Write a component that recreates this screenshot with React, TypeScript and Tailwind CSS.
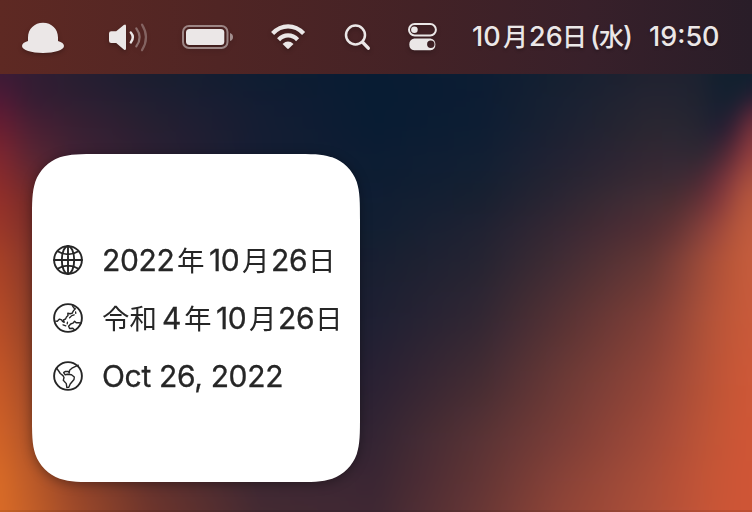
import type { ReactNode } from "react";

const XS = [0, 32, 75, 150, 260, 375, 480, 560, 650, 675, 700, 715, 730, 740, 752];

// Wallpaper colours: one row per y position, one colour per entry of XS.
const ROWS: { y: number; c: string[] }[] = [
  { y: 74, c: ["#3d1a36", "#321d33", "#281e31", "#1b1e30", "#0f1d32", "#081c33", "#0c1d33", "#152031", "#202230", "#202230", "#1c2230", "#14202f", "#13202f", "#10202f", "#10202f"] },
  { y: 98, c: ["#501a36", "#361d33", "#2d1f32", "#201f31", "#121d33", "#081c33", "#0d1d33", "#182132", "#252431", "#232431", "#202330", "#172031", "#152030", "#182031", "#281f33"] },
  { y: 110, c: ["#5c1b34", "#3f1e34", "#331f32", "#231f31", "#141d33", "#081c33", "#0d1d33", "#192132", "#272531", "#262531", "#212431", "#1a2031", "#1d2031", "#2c2033", "#562438"] },
  { y: 130, c: ["#6c1f31", "#4d2034", "#3a2033", "#281f32", "#151d33", "#091c33", "#0e1e34", "#1c2132", "#2b2731", "#2a2732", "#272532", "#222033", "#321f33", "#552637", "#7a353c"] },
  { y: 154, c: ["#7e2630", "#592533", "#402235", "#2c2032", "#151e33", "#0c1d33", "#111f34", "#212233", "#322733", "#322834", "#2f2833", "#3d2635", "#5c2a36", "#7a343c", "#963f3f"] },
  { y: 180, c: ["#8b2c2c", "#68282f", "#402230", "#2a2031", "#151e33", "#0d1d33", "#142032", "#262433", "#3a2a34", "#3d2b34", "#4a2a34", "#662e39", "#83393d", "#9c453e", "#ab513e"] },
  { y: 200, c: ["#94302a", "#752b29", "#3a222f", "#2a2031", "#151e33", "#101e33", "#182031", "#2c2633", "#452e34", "#4c2e33", "#623136", "#7c363b", "#97443c", "#ad513d", "#b8583e"] },
  { y: 230, c: ["#9c3829", "#7d302a", "#3a222f", "#2a2031", "#151e33", "#121f32", "#202233", "#372834", "#542f34", "#643435", "#83403b", "#9a463c", "#ad523b", "#b9573c", "#c15c3e"] },
  { y: 260, c: ["#a84127", "#85372a", "#3a222f", "#2a2031", "#151e33", "#181f31", "#252432", "#402c34", "#643735", "#7c3e38", "#994a3a", "#ac503a", "#b85639", "#c05a3b", "#c55d3e"] },
  { y: 320, c: ["#b74c27", "#904128", "#3a222f", "#2a2031", "#181e32", "#1f2033", "#322734", "#563234", "#803f37", "#934638", "#a95039", "#b75439", "#bf5738", "#c55939", "#c95a3b"] },
  { y: 380, c: ["#c65827", "#a04a28", "#3a222f", "#2a2031", "#201f31", "#2a2133", "#442c33", "#6a3936", "#924538", "#a24b38", "#b25138", "#bd5437", "#c55637", "#ca5737", "#cd5838"] },
  { y: 440, c: ["#d16328", "#b05429", "#6a342c", "#4a2830", "#2c2231", "#342533", "#593335", "#7a3d37", "#a14a38", "#ae4e38", "#bb5337", "#c35536", "#c95636", "#cd5636", "#cf5636"] },
  { y: 482, c: ["#d86b27", "#bd5b28", "#96452a", "#65332e", "#3f2934", "#3b2633", "#623535", "#884238", "#aa4e38", "#b65037", "#c15437", "#c75536", "#cb5536", "#ce5536", "#cf5636"] },
  { y: 512, c: ["#d96b27", "#c25e28", "#9f4a29", "#6f352c", "#442a32", "#3f2833", "#683735", "#8f4437", "#ae4f38", "#b85138", "#c25438", "#c85536", "#cc5536", "#ce5536", "#ce5536"] },
];

function Wallpaper() {
  return (
    <svg className="absolute inset-0" width="752" height="512" viewBox="0 0 752 512" aria-hidden="true">
      <defs>
        <filter id="soften" filterUnits="userSpaceOnUse" x="-60" y="-60" width="872" height="632" colorInterpolationFilters="sRGB">
          <feGaussianBlur stdDeviation="8" />
        </filter>
        {ROWS.map((r, i) => (
          <linearGradient key={i} id={`row${i}`} x1="0" x2="752" y1="0" y2="0" gradientUnits="userSpaceOnUse">
            {r.c.map((c, k) => (
              <stop key={k} offset={XS[k] / 752} stopColor={c} />
            ))}
          </linearGradient>
        ))}
        {ROWS.slice(1).map((r, i) => (
          <g key={i}>
            <linearGradient id={`fade${i + 1}`} x1="0" x2="0" y1={ROWS[i].y} y2={r.y} gradientUnits="userSpaceOnUse">
              <stop offset="0" stopColor="#fff" stopOpacity="0" />
              <stop offset="1" stopColor="#fff" />
            </linearGradient>
            <mask id={`mask${i + 1}`} maskUnits="userSpaceOnUse" x="-60" y="-60" width="872" height="632" style={{ maskType: "alpha" }}>
              <rect x="-60" y="-60" width="872" height="632" fill={`url(#fade${i + 1})`} />
            </mask>
          </g>
        ))}
      </defs>
      <g filter="url(#soften)">
        {ROWS.map((_, i) => (
          <rect key={i} x="-60" y="-60" width="872" height="632" fill={`url(#row${i})`} mask={i ? `url(#mask${i})` : undefined} />
        ))}
      </g>
      <rect y="510" width="752" height="2" fill="#000" opacity=".08" />
    </svg>
  );
}

function MenuIcons() {
  return (
    <svg className="shrink-0 drop-shadow-[0_2px_2px_rgba(0,0,0,0.25)]" width="460" height="74" viewBox="0 0 460 74" fill="none">
      <g fill="#ebe7e7">
        <path d="M28 41V37.500C28 29 34.500 22.800 43 22.800S58 29 58 37.500V41C61.800 42 64 43.800 64 46C64 50 54.500 53 43 53S22 50 22 46C22 43.800 24.200 42 28 41Z" />
        <path d="M109 33.400Q109 31.200 111.200 31.200H116.200L123.800 25Q126 23.600 126 26V48.600Q126 51 123.800 49.500L116.200 43H111.200Q109 43 109 40.800Z" />
        <rect x="186" y="29" width="38.300" height="16" rx="3.500" />
        <path d="M282.600 43.900Q288 39.300 293.500 43.900L288.900 48.500Q288 49.300 287.100 48.500Z" />
        <path fillRule="evenodd" d="M414.200 38.500H430.500A6 6 0 0 1 430.500 50.300H414.200A6 6 0 0 1 414.200 38.500ZM430.800 40.600A3.700 3.700 0 1 0 430.800 48A3.700 3.700 0 1 0 430.800 40.600Z" />
        <circle cx="414.400" cy="29.800" r="3.300" />
      </g>
      <g stroke="#ebe7e7" strokeLinecap="round">
        <path d="M130.800 32.500Q135 37.400 130.800 42.400" strokeWidth="2.400" />
        <path d="M136.300 28.300Q143 37.300 136.300 46.400" strokeWidth="2.200" opacity=".38" />
        <path d="M142 24.600Q150 37.300 142 50.200" strokeWidth="2.200" opacity=".32" />
        <circle cx="355.500" cy="35" r="9.500" strokeWidth="2.500" />
        <path d="M363 42.600L368.300 48.200" strokeWidth="3.400" />
      </g>
      <rect x="183" y="26" width="44.500" height="22" rx="6" stroke="#ebe7e7" strokeWidth="2" opacity=".5" />
      <path d="M230 33Q233 34 233 37T230 41Z" fill="#ebe7e7" opacity=".55" />
      <g stroke="#ebe7e7" strokeWidth="4.200">
        <path d="M272.600 33.500C281.500 24 294.600 24 303.600 33.500" />
        <path d="M278.600 39.700C284 34 292.200 34 297.600 39.700" />
      </g>
      <rect x="409" y="24.100" width="26.900" height="11.300" rx="5.650" stroke="#ebe7e7" strokeWidth="2" />
    </svg>
  );
}

function Globe({ children }: { children: ReactNode }) {
  return (
    <svg className="shrink-0" width="32" height="32" viewBox="0 0 32 32" fill="none" stroke="#262626" strokeWidth="1.400" strokeLinecap="round" strokeLinejoin="round">
      <circle cx="16" cy="16" r="13.900" strokeWidth="1.900" />
      {children}
    </svg>
  );
}

function Seg({ w, kanji, children }: { w: string; kanji?: boolean; children: string }) {
  return (
    <span
      className={`inline-block leading-none ${w} ${kanji ? "font-['Noto_Sans_CJK_JP',sans-serif] text-[27.5px] tracking-normal [-webkit-text-stroke:0]" : ""}`}
    >
      {children}
    </span>
  );
}

function MenuKanji({ w, children }: { w: string; children: string }) {
  return <span className={`inline-block font-['Noto_Sans_CJK_JP',sans-serif] text-[25px] leading-none ${w}`}>{children}</span>;
}

function Row({ icon, children }: { icon: ReactNode; children: ReactNode }) {
  return (
    <li className="flex h-[58px] items-center">
      {icon}
      <span className="ml-[18px] block h-[58px] text-[30px] leading-[58px] tracking-[-0.33px] whitespace-nowrap [-webkit-text-stroke:0.3px_#262626]">
        {children}
      </span>
    </li>
  );
}

export default function App() {
  return (
    <div className="relative h-[512px] w-[752px] overflow-hidden bg-[#0b1d33] font-['Inter','Noto_Sans_CJK_JP',sans-serif]">
      <Wallpaper />
      <div className="relative flex h-full flex-col">
        <header className="flex h-[74px] items-start bg-[linear-gradient(90deg,#5e2923_0%,#502524_29%,#432226_56%,#38202a_78%,#291d28_100%)]">
          <MenuIcons />
          <div className="ml-[12px] text-[27px] leading-[73px] font-medium whitespace-nowrap text-[#ebe7e7] [text-shadow:0_2px_3px_rgba(0,0,0,0.25)]">
            <span className="inline-block w-[31px]">10</span>
            <MenuKanji w="w-[26px]">月</MenuKanji>
            <span className="inline-block w-[33px]">26</span>
            <MenuKanji w="w-[28px]">日</MenuKanji>
            <span className="inline-block w-[9px]">(</span>
            <MenuKanji w="w-[24px]">水</MenuKanji>
            <span className="inline-block w-[26px]">)</span>
            <span className="inline-block">19:50</span>
          </div>
        </header>
        <main className="flex flex-1 items-start pt-[80px] pl-[32px]">
          <div className="drop-shadow-[0_2px_6px_rgba(0,0,0,0.35)]">
            <ul className="flex h-[328px] w-[328px] flex-col bg-white pt-[77px] pl-[20px] text-[#262626] [clip-path:path('M67.26_0H260.74C280.11_0_289.79_0_298.52_2.88L300.21_3.3C311.6_7.44_320.56_16.4_324.7_27.79C328_38.21_328_47.89_328_67.26V260.74C328_280.11_328_289.79_324.7_300.21C320.56_311.6_311.6_320.56_300.21_324.7C289.79_328_280.11_328_260.74_328H67.26C47.89_328_38.21_328_27.79_324.7C16.4_320.56_7.44_311.6_3.3_300.21C0_289.79_0_280.11_0_260.74V67.26C0_47.89_0_38.21_3.3_27.79C7.44_16.4_16.4_7.44_27.79_3.3C38.21_0_47.89_0_67.26_0Z')]">
              <Row
                icon={
                  <Globe>
                    <g strokeWidth="1.900">
                      <ellipse cx="16" cy="16" rx="6.200" ry="13.900" />
                      <path d="M16 2V30M2 16H30M5.500 7.200Q16 13.500 26.500 7.200M5.500 24.800Q16 18.500 26.500 24.800" />
                    </g>
                  </Globe>
                }
              >
                <Seg w="w-[75px]">2022</Seg>
                <Seg w="w-[32px]" kanji>年</Seg>
                <Seg w="w-[33px]">10</Seg>
                <Seg w="w-[29px]" kanji>月</Seg>
                <Seg w="w-[37px]">26</Seg>
                <Seg w="w-[28px]" kanji>日</Seg>
              </Row>
              <Row
                icon={
                  <Globe>
                    <path d="M20.500 3.800L21.800 5.800L23.300 6.800L21.700 8.400L20 11.300L18 11.800L15.800 11.300L16 13.600L14.500 15L13.500 17L11.500 17.800L12.200 20.300L10.500 19.300L9.600 17.800L7.500 17.100L5.300 19.300L3.600 19.100" />
                    <path d="M11 22.800L13.800 23.800M15.500 20.200L15.200 21.800M17.600 15.700L19.800 13.600L22.200 12.800M23.600 9.800L23.800 11.300" strokeWidth="1.300" />
                    <path d="M22.800 28.200L20.800 26.200L17.600 26.500L16.600 24.300L18.700 22L20.900 21.200L22.600 19.200L24.200 20.800L27 20.600L29 21.300" />
                  </Globe>
                }
              >
                <Seg w="w-[60px]" kanji>令和</Seg>
                <Seg w="w-[22px]">4</Seg>
                <Seg w="w-[32px]" kanji>年</Seg>
                <Seg w="w-[33px]">10</Seg>
                <Seg w="w-[29px]" kanji>月</Seg>
                <Seg w="w-[37px]">26</Seg>
                <Seg w="w-[28px]" kanji>日</Seg>
              </Row>
              <Row
                icon={
                  <Globe>
                    <path d="M4.500 8L7 11.500L8.300 13.500L11 15.600L12 17.500L11.300 20.300L14.300 23.600L14.800 27.500L16.800 27.300L18.200 24L22 19.500L22.300 17L19.500 14.800L15.500 14.200L13.200 14.800L11.600 12.700L13.500 11.400L16.300 11.500L17.200 13L17.600 10.200L20.500 7.800L26.300 5.200" />
                  </Globe>
                }
              >
                Oct 26, 2022
              </Row>
            </ul>
          </div>
        </main>
      </div>
    </div>
  );
}
